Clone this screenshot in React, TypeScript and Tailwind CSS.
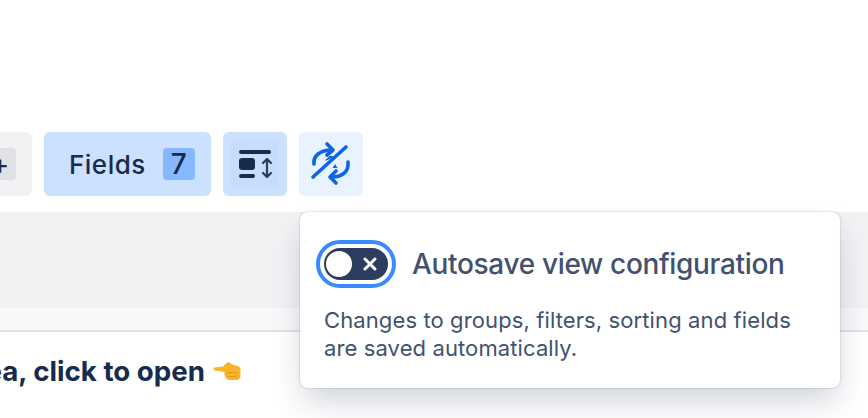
const font = { fontFamily: "Inter, 'Noto Sans', sans-serif" };

const RowHeightIcon = () => (
  <svg width="48" height="48" viewBox="0 0 48 48" fill="none">
    <rect x="8" y="10" width="32" height="4" rx="2" fill="#172b4d" />
    <rect x="8" y="18" width="16" height="12" rx="3" fill="#172b4d" />
    <rect x="8" y="34" width="16" height="4" rx="2" fill="#172b4d" />
    <path d="M36 19v18M32 23l4-4 4 4M32 33l4 4 4-4" stroke="#2c3e5d" strokeWidth="2.200" strokeLinecap="round" strokeLinejoin="round" />
  </svg>
);

const SyncOffIcon = () => (
  <svg width="48" height="48" viewBox="0 0 48 48" fill="none" stroke="#0c66e4" strokeWidth="3.600" strokeLinecap="round" strokeLinejoin="round">
    <path d="M7 24C6 16 13 10 25 10" />
    <path d="M20 4l6 6-6 5" />
    <path d="M6 37 39 7" />
    <path d="M41 22c1 9-5 15-16 15" />
    <path d="M29 31l-6 6 6 6" />
    <path d="M19 20l4-4 3 1z" fill="#0c66e4" strokeWidth="1" />
    <path d="M28 24l2.500 4h-5z" fill="#0c66e4" stroke="none" />
  </svg>
);

const PointingHand = () => (
  <svg width="28" height="19" viewBox="0 0 28 19">
    <path d="M1.500 5.500 10 4.500l3-3c1-1 2.500-1.500 3.500-1 1 .5 1.500 1.500 2.500 2l6 1.500c1.500.5 2.500 2 2.500 4v6c0 2-1.500 3.500-3.500 4h-7c-2.500 0-4.500-1.500-5-4-.5-1-1-2-.5-4L2 8.500C.5 8.500 0 6 1.500 5.500z" fill="#f7b52c" />
    <path d="M14 11c3-.5 7-.5 11 0M15 14.500c3 0 6 0 9-.5" stroke="#dc9518" strokeWidth="1" fill="none" />
  </svg>
);

export default function App() {
  return (
    <div className="relative h-[418px] w-[868px] overflow-hidden bg-white" style={font}>
      {/* Toolbar */}
      <div className="flex justify-end gap-3 pt-[132px] pr-[505px]">
        <button className="flex h-16 w-[64px] shrink-0 items-center justify-end rounded-md bg-[#f1f2f4] pr-4">
          <span className="flex h-8 w-8 items-center justify-center rounded bg-[#dfe1e6] text-[28px] text-[#172b4d]">+</span>
        </button>
        <button className="flex h-16 w-[167px] shrink-0 items-center justify-between rounded-md bg-[#cce0ff] pr-4 pl-[25px] text-[26px] font-medium tracking-[0.5px] text-[#172b4d]">
          Fields
          <span className="flex h-8 w-8 items-center justify-center rounded bg-[#85b8ff] text-[28px] font-medium">7</span>
        </button>
        <button className="flex h-16 w-16 shrink-0 items-center justify-center rounded-md bg-[#cce0ff]">
          <span className="bg-[#c8ddfd]"><RowHeightIcon /></span>
        </button>
        <button className="flex h-16 w-16 shrink-0 items-center justify-center rounded-md bg-[#e9f2ff]">
          <SyncOffIcon />
        </button>
      </div>

      {/* Table header bands */}
      <div className="mt-4 h-24 bg-[#f1f2f4]" />
      <div className="h-[24px] border-b-2 border-[#dfe1e6] bg-[#f7f8f9]" />

      {/* First row */}
      <div className="flex h-[78px] w-[300px] items-start justify-end overflow-hidden">
        <div className="flex shrink-0 items-center gap-2 pt-[21px] pr-[59px] text-[27.7px] leading-[36px] font-bold whitespace-nowrap text-[#172b4d]">
          Idea, click to open
          <PointingHand />
        </div>
      </div>

      {/* Autosave popover */}
      <div className="absolute top-[212px] left-[300px] h-[176px] w-[540px] rounded-lg bg-white px-6 pt-7 shadow-[0_16px_32px_-4px_rgba(9,30,66,0.2),0_0_2px_rgba(9,30,66,0.3)]">
        <div className="flex items-center gap-4">
          <div className="-ml-2 rounded-full border-4 border-[#388bff] p-1">
            <div className="flex h-8 w-16 items-center justify-between rounded-full bg-[#2c3e5d] pr-[11px] pl-[2px]">
              <span className="h-[26px] w-[26px] rounded-full bg-white" />
              <svg width="14" height="14" viewBox="0 0 14 14" stroke="white" strokeWidth="3" strokeLinecap="round">
                <path d="M2 2l10 10M12 2 2 12" />
              </svg>
            </div>
          </div>
          <span className="text-[28px] leading-8 font-medium tracking-[-0.33px] whitespace-nowrap text-[#42526e]">Autosave view configuration</span>
        </div>
        <p className="mt-[18px] text-[22px] leading-7 tracking-[0.11px] text-[#42526e]">
          Changes to groups, filters, sorting and fields are saved automatically.
        </p>
      </div>
    </div>
  );
}
